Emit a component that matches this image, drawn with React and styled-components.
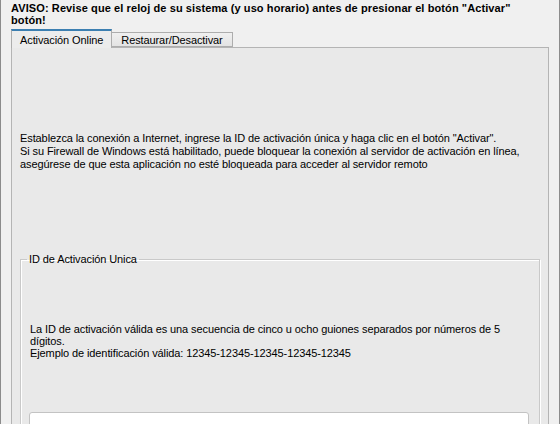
import React, { useState } from 'react';
import styled, { createGlobalStyle } from 'styled-components';

const GlobalStyle = createGlobalStyle`
  html, body {
    margin: 0;
    padding: 0;
    background: #f0f0f0;
  }
  body {
    font-family: 'Liberation Sans', Arial, sans-serif;
    font-size: 11px;
    color: #000;
  }
`;

const tabs = ['Activación Online', 'Restaurar/Desactivar'];

const App = () => {
  const [active, setActive] = useState(0);
  const [code, setCode] = useState('');

  return (
    <Window>
      <GlobalStyle />
      <Warning>
        AVISO: Revise que el reloj de su sistema (y uso horario) antes de presionar el botón "Activar" botón!
      </Warning>
      <TabBar>
        {tabs.map((label, i) => (
          <Tab key={label} $active={i === active} onClick={() => setActive(i)}>
            {label}
          </Tab>
        ))}
      </TabBar>
      <Panel>
        <Intro>
          Establezca la conexión a Internet, ingrese la ID de activación única y haga clic en el botón "Activar".
          <br />
          Si su Firewall de Windows está habilitado, puede bloquear la conexión al servidor de activación en línea,
          <br />
          asegúrese de que esta aplicación no esté bloqueada para acceder al servidor remoto
        </Intro>
        <GroupBox>
          <Legend>ID de Activación Unica</Legend>
          <Hint>
            La ID de activación válida es una secuencia de cinco u ocho guiones separados por números de 5 dígitos.
            <br />
            Ejemplo de identificación válida: 12345-12345-12345-12345-12345
          </Hint>
          <CodeInput value={code} onChange={(e) => setCode(e.target.value)} />
        </GroupBox>
      </Panel>
    </Window>
  );
};

const Window = styled.div`
  box-sizing: border-box;
  width: 560px;
  height: 424px;
  overflow: hidden;
  display: flex;
  flex-direction: column;
  padding: 0 10px 0 10px;
  border-left: 1px solid #8c8c8c;
  border-right: 1px solid #8c8c8c;
`;

const Warning = styled.div`
  font-weight: bold;
  font-size: 11px;
  line-height: 12px;
  letter-spacing: 0.1px;
  padding-top: 2px;
  width: 525px;
`;

const TabBar = styled.div`
  display: flex;
  align-items: flex-end;
  height: 19px;
  margin-top: 3px;
  position: relative;
  z-index: 1;
`;

const Tab = styled.div`
  box-sizing: border-box;
  height: ${({ $active }) => ($active ? '19px' : '15px')};
  padding: 0 ${({ $active }) => ($active ? '8px' : '9px')};
  margin-bottom: ${({ $active }) => ($active ? '-1px' : '0')};
  margin-left: ${({ $active }) => ($active ? '0' : '-1px')};
  display: flex;
  align-items: center;
  border: 1px solid #adadad;
  border-bottom: ${({ $active }) => ($active ? 'none' : '1px solid #adadad')};
  border-top: ${({ $active }) => ($active ? '2px solid #3c7fb1' : '1px solid #adadad')};
  background: ${({ $active }) => ($active ? '#ececec' : 'linear-gradient(#f0f0f0, #e3e3e3)')};
  letter-spacing: -0.1px;
  cursor: default;
  white-space: nowrap;
`;

const Panel = styled.div`
  flex: 1;
  box-sizing: border-box;
  border: 1px solid #b4b4b4;
  border-bottom: none;
  background: #e9e9e9;
  padding: 84px 8px 0 8px;
  letter-spacing: -0.1px;
`;

const Intro = styled.p`
  margin: 0;
  line-height: 13px;
`;

const GroupBox = styled.fieldset`
  margin: 82px 0 0 0;
  padding: 58px 9px 0 8px;
  border: 1px solid #c9c9c9;
  box-shadow: inset 1px 1px 0 #fff, 1px 1px 0 #fff;
  border-bottom: none;
  min-height: 200px;
`;

const Legend = styled.legend`
  padding: 0 2px;
  margin-left: -2px;
`;

const Hint = styled.p`
  margin: 0 0 0 1px;
  line-height: 12px;
`;

const CodeInput = styled.input`
  display: block;
  box-sizing: border-box;
  width: 500px;
  height: 24px;
  margin-top: 53px;
  border: 1px solid #c3c3c3;
  border-radius: 3px;
  background: #fff;
  outline: none;
  font-family: inherit;
  font-size: 11px;
`;

export default App;
